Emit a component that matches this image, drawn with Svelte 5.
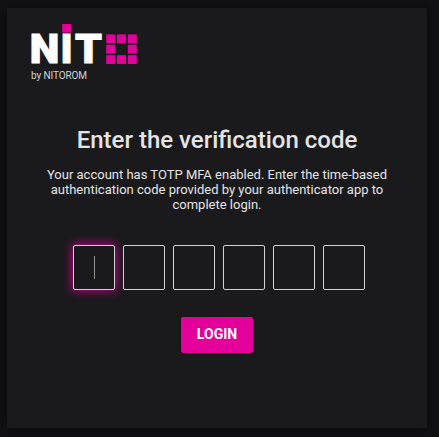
<script lang="ts">
  const CODE_LENGTH = 6;

  let { onLogin = (_code: string) => {} }: { onLogin?: (code: string) => void } = $props();

  let digits = $state<string[]>(Array(CODE_LENGTH).fill(""));
  let active = $state(0);

  // logo squares, the centre one is left out
  const blocks = [0, 1, 2, 3, 5, 6, 7, 8].map((i) => ({
    x: 75.2 + (i % 3) * 10.8,
    y: 10.4 + Math.floor(i / 3) * 10.4,
  }));

  function onKeydown(e: KeyboardEvent) {
    if (/^\d$/.test(e.key)) {
      digits[active] = e.key;
      active = Math.min(active + 1, CODE_LENGTH - 1);
    } else if (e.key === "Backspace") {
      if (!digits[active] && active > 0) active -= 1;
      digits[active] = "";
    }
  }
</script>

<svelte:window onkeydown={onKeydown} />

<main class="page">
  <section class="card">
    <header class="logo">
      <svg width="106" height="41" viewBox="0 0 106 41" role="img" aria-label="NITO">
        <g class="wordmark">
          <text transform="translate(-1.3 39.4) scale(1.05 1)">N</text>
          <text transform="translate(29.5 39.4)">I</text>
          <text transform="translate(44 39.4) scale(1.07 1)">T</text>
        </g>
        <rect class="pink" x="31.2" y="0" width="8.8" height="8.6" />
        {#each blocks as b}
          <rect class="pink" x={b.x} y={b.y} width="9" height="8.8" />
        {/each}
      </svg>
      <span class="byline">by NITOROM</span>
    </header>

    <h1>Enter the verification code</h1>
    <p>
      Your account has TOTP MFA enabled. Enter the time-based authentication code provided by your
      authenticator app to complete login.
    </p>

    <div class="code">
      {#each digits as digit, i}
        <button class="digit" class:active={i === active} aria-label="Digit {i + 1}" onclick={() => (active = i)}>
          {#if digit}{digit}{:else if i === active}<span class="caret"></span>{/if}
        </button>
      {/each}
    </div>

    <button class="login" onclick={() => onLogin(digits.join(""))}>LOGIN</button>
  </section>
</main>

<style>
  :global(body) {
    background: #111113;
  }
  .page {
    box-sizing: border-box;
    height: 437px;
    padding: 8px 12px 9px 7px;
    overflow: hidden;
    font-family: Roboto, sans-serif;
    color: #e4e4e6;
  }
  .card {
    box-sizing: border-box;
    display: flex;
    flex-direction: column;
    align-items: center;
    width: 420px;
    height: 420px;
    padding: 16px 24px;
    background: #1a1a1c;
    box-shadow: 0 0 10px rgba(0, 0, 0, 0.5);
  }
  .logo {
    display: flex;
    flex-direction: column;
    align-self: flex-start;
    height: 59px;
  }
  .logo svg {
    display: block;
    overflow: visible;
  }
  .wordmark {
    font-family: Roboto, sans-serif;
    font-size: 40px;
    font-weight: 900;
    fill: #fff;
    stroke: #fff;
    stroke-width: 1px;
  }
  .pink {
    fill: #e4009b;
  }
  .byline {
    margin-top: 4px;
    font-size: 10px;
    line-height: 14px;
    letter-spacing: -0.1px;
    color: #d4d4d4;
  }
  h1 {
    margin: 43px 0 0;
    font-size: 24px;
    font-weight: 500;
    line-height: 28px;
    white-space: nowrap;
  }
  p {
    width: 350px;
    margin: 13px 0 0;
    font-size: 13px;
    line-height: 15px;
    text-align: center;
  }
  .code {
    display: flex;
    gap: 8px;
    margin: 33px 0 27px;
    padding-left: 4px;
  }
  .digit {
    box-sizing: border-box;
    display: flex;
    align-items: center;
    justify-content: center;
    width: 42px;
    height: 45px;
    padding: 0;
    border: 1px solid #d2d2d2;
    border-radius: 2px;
    background: #1a1a1c;
    color: inherit;
    font: 20px Roboto, sans-serif;
  }
  .digit.active {
    box-shadow: 0 0 10px 1px #c00088;
    outline: none;
  }
  .caret {
    width: 1px;
    height: 23px;
    background: #929292;
  }
  .login {
    width: 72px;
    height: 36px;
    padding: 0 0 2px;
    border: 0;
    border-radius: 2px;
    background: #e4009b;
    box-shadow: 0 1px 3px rgba(0, 0, 0, 0.5);
    color: #fff;
    font: 700 14px Roboto, sans-serif;
  }
</style>
